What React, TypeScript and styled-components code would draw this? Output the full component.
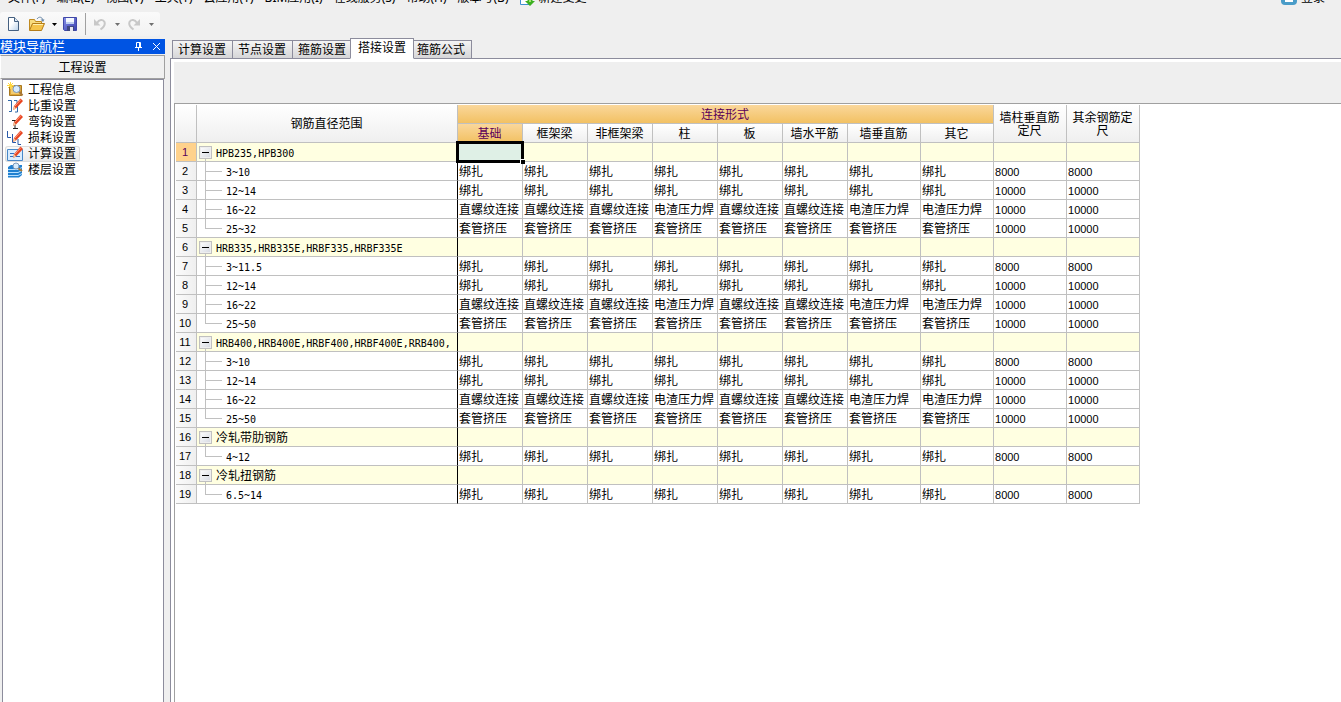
import React, { useState } from "react";
import styled, { createGlobalStyle, css } from "styled-components";

const CJK = `"Noto Sans CJK SC", sans-serif`;
const GRID = "#c0c0c0";
const FRAME = "#8c8c9c";

const GlobalStyle = createGlobalStyle`
  *, *::before, *::after { box-sizing: border-box; }
  body {
    margin: 0;
    background: #efefef;
    color: #000;
    font: 12px/16px "Liberation Sans", ${CJK};
    overflow: hidden;
  }
  button {
    margin: 0;
    padding: 0;
    border: 0;
    background: none;
    color: inherit;
    font: inherit;
    line-height: inherit;
    white-space: nowrap;
  }
`;

const Page = styled.div`
  display: flex;
  flex-direction: column;
  height: 100vh;
`;

const MenuBar = styled.nav`
  display: flex;
  align-items: flex-end;
  gap: 11px;
  height: 7px;
  padding: 0 16px 0 8px;
  font-family: "Noto Sans", ${CJK};
`;

const MenuItem = styled.button<{ $push?: boolean }>`
  display: flex;
  align-items: flex-end;
  gap: 4px;
  flex: none;
  height: 18px;
  line-height: 18px;
  margin-left: ${(p) => (p.$push ? "auto" : "0")};
`;

const ToolBar = styled.div`
  display: flex;
  align-items: center;
  width: 160px;
  height: 24px;
  margin: 5px 0 3px;
  padding-left: 4px;
  border-radius: 3px;
  background: linear-gradient(#fafafa, #f2f2f2);
`;

const ToolButton = styled.button<{ $w: number }>`
  display: flex;
  align-items: center;
  justify-content: center;
  width: ${(p) => p.$w}px;
  height: 22px;
`;

const ToolDivider = styled.span`
  width: 1px;
  height: 22px;
  margin: 0 5px 0 3px;
  background: #a0a0a0;
`;

const Body = styled.div`
  display: flex;
  flex: 1;
  gap: 5px;
  min-height: 0;
`;

const Sidebar = styled.aside`
  display: flex;
  flex-direction: column;
  flex: none;
  width: 165px;
`;

const SideTitle = styled.div`
  display: flex;
  align-items: center;
  height: 15px;
  background: #0054e3;
  color: #fff;
  line-height: 15px;
`;

const SideTitleText = styled.span`
  flex: 1;
  font-size: 13px;
`;

const SideTitleButton = styled.button`
  display: flex;
  justify-content: center;
  width: 18px;
`;

const SectionButton = styled.button`
  height: 24px;
  margin-top: 1px;
  padding-top: 2px;
  border: 1px solid #a0a0a0;
  border-left-color: #fff;
  background: #f0f0f0;
  line-height: 20px;
`;

const NavList = styled.ul`
  flex: 1;
  margin: 0 1px 0 2px;
  padding: 2px 0 0 2px;
  border: 1px solid ${FRAME};
  border-bottom: 0;
  background: #fff;
  list-style: none;
`;

const NavItem = styled.li`
  display: flex;
  height: 16px;
`;

const NavButton = styled.button<{ $active: boolean }>`
  display: flex;
  align-items: center;
  gap: 4px;
  height: 16px;
  padding: 0 4px 0 2px;
  border-radius: 3px;
  ${(p) =>
    p.$active &&
    css`
      background: linear-gradient(#fbfbfb, #e8e8e8);
      box-shadow: inset 0 0 0 1px #dcdcdc;
    `}
`;

const Main = styled.main`
  display: flex;
  flex-direction: column;
  flex: 1;
  min-width: 0;
`;

const Tabs = styled.div`
  display: flex;
  align-items: flex-end;
  flex: none;
  height: 20px;
  margin-bottom: -1px;
  padding-left: 2px;
`;

const Tab = styled.button<{ $active: boolean }>`
  flex: none;
  height: 19px;
  padding: 1px 6px 0 5px;
  margin-right: -1px;
  border: 1px solid ${FRAME};
  background: linear-gradient(#f4f4f4, #d6d6d8);
  line-height: 17px;
  ${(p) =>
    p.$active &&
    css`
      position: relative;
      height: 21px;
      margin: 0 -3px 0 -2px;
      padding: 0 7px;
      border-bottom-color: #fff;
      background: #fff;
    `}
`;

const TabPanel = styled.section`
  display: flex;
  flex-direction: column;
  flex: 1;
  min-height: 0;
  padding: 3px 0 0 3px;
  border-top: 1px solid ${FRAME};
  border-left: 1px solid ${FRAME};
  background: #fff;
`;

const PanelHead = styled.div`
  flex: none;
  height: 41px;
  background: #efefef;
`;

const Sheet = styled.div`
  flex: 1;
  padding: 1px 0 0 1px;
  border-top: 1px solid #a0a0a0;
  border-left: 1px solid #a0a0a0;
  background: #fff;
`;

const Table = styled.table`
  width: 964px;
  table-layout: fixed;
  border-collapse: separate;
  border-spacing: 0;
`;

const Col = styled.col<{ $w: number }>`
  width: ${(p) => p.$w}px;
`;

const HeadCell = styled.th<{ $hot?: boolean }>`
  height: 19px;
  padding: 2px 5px 0 4px;
  border-right: 1px solid ${GRID};
  border-bottom: 1px solid ${GRID};
  background: ${(p) =>
    p.$hot ? "linear-gradient(#fad79b, #f2c163)" : "linear-gradient(#fff, #efefef)"};
  color: ${(p) => (p.$hot ? "#5a005a" : "#000")};
  font-weight: 400;
  line-height: 13px;
  text-align: center;
`;

const RowHead = styled.th<{ $hot: boolean }>`
  height: 19px;
  padding: 0 2px 0 0;
  border-right: 1px solid ${GRID};
  border-bottom: 1px solid ${GRID};
  background: ${(p) => (p.$hot ? "#ffd28c" : "linear-gradient(90deg, #fbfbfb, #efefef)")};
  color: ${(p) => (p.$hot ? "#5a005a" : "#000")};
  font-size: 11px;
  font-weight: 400;
  line-height: 18px;
  text-align: center;
`;

const Row = styled.tr<{ $group: boolean }>`
  background: ${(p) => (p.$group ? "#ffffe1" : "#fff")};
`;

const Cell = styled.td`
  position: relative;
  height: 19px;
  padding: 2px 0 0 1px;
  border-right: 1px solid ${GRID};
  border-bottom: 1px solid ${GRID};
  line-height: 16px;
  white-space: nowrap;
`;

const NumberCell = styled(Cell)`
  font-size: 11px;
`;

const NameCell = styled.td`
  height: 19px;
  padding: 0;
  border-right: 1px solid #000;
  border-bottom: 1px solid ${GRID};
`;

const NameLine = styled.div`
  display: flex;
  height: 18px;
  padding-left: 2px;
  white-space: nowrap;
`;

const Expander = styled.span`
  display: flex;
  flex-direction: column;
  align-items: center;
  width: 13px;
  padding-top: 3px;
  &::after {
    content: "";
    flex: 1;
    border-left: 1px solid ${GRID};
  }
`;

const ExpandButton = styled.button`
  display: flex;
  align-items: center;
  justify-content: center;
  width: 13px;
  height: 13px;
  border: 1px solid ${GRID};
  background: linear-gradient(135deg, #fff, #d4d8e0);
  box-shadow: inset 0 0 0 1px #eee;
  &::before {
    content: "";
    width: 7px;
    height: 1px;
    background: #000;
  }
`;

const Guide = styled.span<{ $last: boolean }>`
  display: flex;
  flex-direction: column;
  width: 17px;
  height: 19px;
  margin-left: 6px;
  &::before {
    content: "";
    height: 10px;
    border-left: 1px solid ${GRID};
    border-bottom: 1px solid ${GRID};
  }
  &::after {
    content: "";
    height: 9px;
    border-left: ${(p) => (p.$last ? "0" : `1px solid ${GRID}`)};
  }
`;

const Name = styled.span<{ $latin: boolean }>`
  margin-left: 4px;
  padding-top: 2px;
  line-height: 16px;
  ${(p) =>
    p.$latin &&
    css`
      font-family: "DejaVu Sans Mono", monospace;
      font-size: 10px;
      line-height: 17px;
    `}
`;

const Cursor = styled.span`
  position: absolute;
  z-index: 1;
  inset: -2px;
  border: 3px solid #000;
  background: #dff0e6;
  &::after {
    content: "";
    position: absolute;
    right: -4px;
    bottom: -4px;
    width: 5px;
    height: 5px;
    border: solid #fff;
    border-width: 1px 0 0 1px;
    background: #000;
  }
`;

const FileIcon = () => (
  <svg width="14" height="16" viewBox="0 0 14 16" aria-hidden="true">
    <defs>
      <linearGradient id="sheetFill" x1="0" y1="0" x2="1" y2="1">
        <stop offset="0.4" stopColor="#fff" />
        <stop offset="1" stopColor="#b8d0e8" />
      </linearGradient>
    </defs>
    <path d="M2.5 1.500h6l4 4v9h-10z" fill="url(#sheetFill)" stroke="#456080" />
    <path d="M8.500 1.500v4h4" fill="#dce8f4" stroke="#456080" />
  </svg>
);

const OpenIcon = () => (
  <svg width="17" height="16" viewBox="0 0 17 16" aria-hidden="true">
    <path d="M1.500 14V3.500h5l1 2h6v3" fill="#f8dc80" stroke="#c08a20" />
    <path d="M1.500 14.500l3-7h12l-3 7z" fill="#f5c44c" stroke="#b47c18" />
    <path d="M5 8.500h10" stroke="#fff0b0" />
    <path d="M9 3c2-3 5-2 6 1" fill="none" stroke="#6888a8" />
    <path d="M12.500 3.500h4l-1.500 2.500z" fill="#6888a8" />
  </svg>
);

const SaveIcon = () => (
  <svg width="16" height="16" viewBox="0 0 16 16" aria-hidden="true">
    <defs>
      <linearGradient id="diskFill" x1="0" y1="0" x2="1" y2="1">
        <stop offset="0" stopColor="#8890e8" />
        <stop offset="1" stopColor="#3840b0" />
      </linearGradient>
    </defs>
    <path d="M1.500 1.500h13v13h-12l-1-1z" fill="url(#diskFill)" stroke="#4048a8" />
    <path d="M4 2h8v6H4z" fill="#f4f8ff" />
    <path d="M4 6h8v2H4z" fill="#c0d0f0" />
    <path d="M5 10h7v5H5z" fill="#404880" />
    <path d="M8 11h3v4H8z" fill="#e8e8f0" />
  </svg>
);

const UndoIcon = ({ flip = false }: { flip?: boolean }) => (
  <svg width="14" height="14" viewBox="0 0 14 14" aria-hidden="true">
    <g transform={flip ? "matrix(-1 0 0 1 14 0)" : undefined}>
      <path d="M1 2v6.500h6.500z" fill="#c8c8c8" />
      <path
        d="M4 6C6 2.500 10 2 11.500 5c1 3-1 5.500-4 7.500"
        fill="none"
        stroke="#c8c8c8"
        strokeWidth="2"
      />
    </g>
  </svg>
);

const Caret = ({ color = "#000" }: { color?: string }) => (
  <svg width="5" height="3" viewBox="0 0 5 3" aria-hidden="true">
    <path d="M0 0h5L2.500 3z" fill={color} />
  </svg>
);

const PinIcon = () => (
  <svg width="9" height="11" viewBox="0 0 9 11" aria-hidden="true">
    <path d="M2.500 6V1.500h4V6M1 6.500h7M4.500 7v3M5.500 2v4" fill="none" stroke="#fff" />
  </svg>
);

const CloseIcon = () => (
  <svg width="9" height="9" viewBox="0 0 9 9" aria-hidden="true">
    <path d="M1 1l7 7M8 1L1 8" stroke="#fff" />
  </svg>
);

const NewChangeIcon = () => (
  <svg width="15" height="16" viewBox="0 0 15 16" aria-hidden="true">
    <path d="M.5 0v13.500h10V0" fill="#fff" stroke="#4090d0" />
    <path d="M7.500 5h5v5h2.500l-5 5-5-5h2.500z" fill="#3cb020" />
    <path d="M10 6v5" stroke="#a0e070" strokeWidth="2" />
  </svg>
);

const UserIcon = () => (
  <svg width="16" height="16" viewBox="0 0 16 16" aria-hidden="true">
    <rect width="16" height="14" rx="4" fill="#4a9cc8" />
    <path d="M4 3h8v8H4z" fill="#fff" />
  </svg>
);

const Pencil = () => (
  <g>
    <path d="M6 12l1-4 6.500-7.500 2.500 2.500-7 7.500z" fill="#e84420" />
    <path d="M8 8L14 1.500" stroke="#ff9c80" />
    <path d="M6 12l1-4 2 2.500z" fill="#f0c8a0" />
  </g>
);

const Lens = () => (
  <g>
    <path d="M12 9.500l3.500 4" stroke="#a87838" strokeWidth="2" />
    <circle cx="9.500" cy="7" r="3.500" fill="#d8ecfc" stroke="#7c98b8" />
  </g>
);

type NavKind = "info" | "weight" | "hook" | "loss" | "calc" | "floor";

const NavIcon = ({ kind }: { kind: NavKind }) => (
  <svg width="17" height="16" viewBox="0 0 17 16" fill="none" aria-hidden="true">
    {kind === "info" && (
      <>
        <path d="M2.500 3.500h12v10h-12z" fill="#e0a838" stroke="#a87820" />
        <path d="M4 5h9v7H4z" fill="#f4cc70" />
        <path d="M3.500 0v7M0 3.500h7M1 1l5 5M6 1L1 6" stroke="#ffd840" />
        <Lens />
      </>
    )}
    {kind === "weight" && (
      <>
        <path d="M1 2.500h3.500v11H2M7 2.500h3v5H8M10.500 8v6H8" stroke="#3068a8" />
        <Pencil />
      </>
    )}
    {kind === "hook" && (
      <>
        <path d="M5 6.500h4M8 6v8M6 14.500h5" stroke="#222" />
        <Pencil />
      </>
    )}
    {kind === "loss" && (
      <>
        <path d="M.5 1v6.500H4M5.500 4v8.500H9M11 9v5.500h3" stroke="#2858a8" />
        <Pencil />
      </>
    )}
    {kind === "calc" && (
      <>
        <path d="M.5 3.500h15v11H.5z" fill="#d8ecff" stroke="#4888c8" />
        <path d="M3 7.500h4M3 10.500h10" stroke="#3070c0" />
        <Pencil />
      </>
    )}
    {kind === "floor" && (
      <>
        <path d="M1 5l3-2h11v10l-3 2.500H1z" fill="#2080d0" />
        <path d="M1 7.500h10l4-2M1 10.500h10l4-2M1 13.500h10l4-2" stroke="#b8e0ff" />
        <path d="M11 6l4 3" stroke="#a87838" strokeWidth="2" />
        <circle cx="9" cy="4" r="3" fill="#d8ecfc" stroke="#7c98b8" />
      </>
    )}
  </svg>
);

const menus = [
  "文件(F)", "编辑(E)", "视图(V)", "工具(T)", "云应用(Y)",
  "BIM应用(I)", "在线服务(S)", "帮助(H)", "版本号(B)",
];

const navItems: { label: string; kind: NavKind }[] = [
  { label: "工程信息", kind: "info" },
  { label: "比重设置", kind: "weight" },
  { label: "弯钩设置", kind: "hook" },
  { label: "损耗设置", kind: "loss" },
  { label: "计算设置", kind: "calc" },
  { label: "楼层设置", kind: "floor" },
];

const tabs = ["计算设置", "节点设置", "箍筋设置", "搭接设置", "箍筋公式"];
const joints = ["基础", "框架梁", "非框架梁", "柱", "板", "墙水平筋", "墙垂直筋", "其它"];
const widths = [21, 261, 65, 65, 65, 65, 65, 65, 73, 73, 73, 73];

type Joint = "tie" | "screw" | "sleeve";
const same = (text: string) => joints.map(() => text);
const jointTexts: Record<Joint, string[]> = {
  tie: same("绑扎"),
  screw: joints.map((j) =>
    ["柱", "墙垂直筋", "其它"].includes(j) ? "电渣压力焊" : "直螺纹连接"
  ),
  sleeve: same("套管挤压"),
};

type Line = { name: string; joint?: Joint; size?: string; last?: boolean };

const fourRanges = (first: string, last: string): Line[] => [
  { name: first, joint: "tie", size: "8000" },
  { name: "12~14", joint: "tie", size: "10000" },
  { name: "16~22", joint: "screw", size: "10000" },
  { name: last, joint: "sleeve", size: "10000", last: true },
];

const lines: Line[] = [
  { name: "HPB235,HPB300" },
  ...fourRanges("3~10", "25~32"),
  { name: "HRB335,HRB335E,HRBF335,HRBF335E" },
  ...fourRanges("3~11.5", "25~50"),
  { name: "HRB400,HRB400E,HRBF400,HRBF400E,RRB400," },
  ...fourRanges("3~10", "25~50"),
  { name: "冷轧带肋钢筋" },
  { name: "4~12", joint: "tie", size: "8000", last: true },
  { name: "冷轧扭钢筋" },
  { name: "6.5~14", joint: "tie", size: "8000", last: true },
];

const LapTable = () => (
  <Table>
    <colgroup>
      {widths.map((w, i) => (
        <Col key={i} $w={w} />
      ))}
    </colgroup>
    <thead>
      <tr>
        <HeadCell rowSpan={2} />
        <HeadCell rowSpan={2}>钢筋直径范围</HeadCell>
        <HeadCell colSpan={8} $hot>连接形式</HeadCell>
        <HeadCell rowSpan={2}>墙柱垂直筋定尺</HeadCell>
        <HeadCell rowSpan={2}>其余钢筋定尺</HeadCell>
      </tr>
      <tr>
        {joints.map((j, i) => (
          <HeadCell key={j} $hot={i === 0}>{j}</HeadCell>
        ))}
      </tr>
    </thead>
    <tbody>
      {lines.map((line, n) => (
        <Row key={n} $group={!line.joint}>
          <RowHead scope="row" $hot={n === 0}>{n + 1}</RowHead>
          <NameCell>
            <NameLine>
              {line.joint ? (
                <Guide $last={!!line.last} />
              ) : (
                <Expander>
                  <ExpandButton aria-label={line.name} aria-expanded="true" />
                </Expander>
              )}
              <Name $latin={/^[\w.,~]+$/.test(line.name)}>{line.name}</Name>
            </NameLine>
          </NameCell>
          {joints.map((j, i) => (
            <Cell key={j}>
              {line.joint && jointTexts[line.joint][i]}
              {n === 0 && i === 0 && <Cursor />}
            </Cell>
          ))}
          <NumberCell>{line.size}</NumberCell>
          <NumberCell>{line.size}</NumberCell>
        </Row>
      ))}
    </tbody>
  </Table>
);

export default function App() {
  const [tab, setTab] = useState("搭接设置");
  const [nav, setNav] = useState("计算设置");

  return (
    <Page>
      <GlobalStyle />
      <MenuBar>
        {menus.map((m) => (
          <MenuItem key={m}>{m}</MenuItem>
        ))}
        <MenuItem>
          <NewChangeIcon />
          新建变更
        </MenuItem>
        <MenuItem $push>
          <UserIcon />
          登录
        </MenuItem>
      </MenuBar>
      <ToolBar>
        <ToolButton $w={18} aria-label="新建"><FileIcon /></ToolButton>
        <ToolButton $w={28} aria-label="打开"><OpenIcon /></ToolButton>
        <ToolButton $w={8} aria-label="最近文件"><Caret /></ToolButton>
        <ToolButton $w={24} aria-label="保存"><SaveIcon /></ToolButton>
        <ToolDivider />
        <ToolButton $w={18} aria-label="撤销"><UndoIcon /></ToolButton>
        <ToolButton $w={16} aria-label="撤销列表"><Caret color="#707070" /></ToolButton>
        <ToolButton $w={18} aria-label="恢复"><UndoIcon flip /></ToolButton>
        <ToolButton $w={16} aria-label="恢复列表"><Caret color="#707070" /></ToolButton>
      </ToolBar>
      <Body>
        <Sidebar>
          <SideTitle>
            <SideTitleText>模块导航栏</SideTitleText>
            <SideTitleButton aria-label="固定"><PinIcon /></SideTitleButton>
            <SideTitleButton aria-label="关闭"><CloseIcon /></SideTitleButton>
          </SideTitle>
          <SectionButton>工程设置</SectionButton>
          <NavList>
            {navItems.map((item) => (
              <NavItem key={item.label}>
                <NavButton $active={nav === item.label} onClick={() => setNav(item.label)}>
                  <NavIcon kind={item.kind} />
                  {item.label}
                </NavButton>
              </NavItem>
            ))}
          </NavList>
        </Sidebar>
        <Main>
          <Tabs role="tablist">
            {tabs.map((t) => (
              <Tab
                key={t}
                role="tab"
                aria-selected={tab === t}
                $active={tab === t}
                onClick={() => setTab(t)}
              >
                {t}
              </Tab>
            ))}
          </Tabs>
          <TabPanel>
            <PanelHead />
            <Sheet>
              <LapTable />
            </Sheet>
          </TabPanel>
        </Main>
      </Body>
    </Page>
  );
}
